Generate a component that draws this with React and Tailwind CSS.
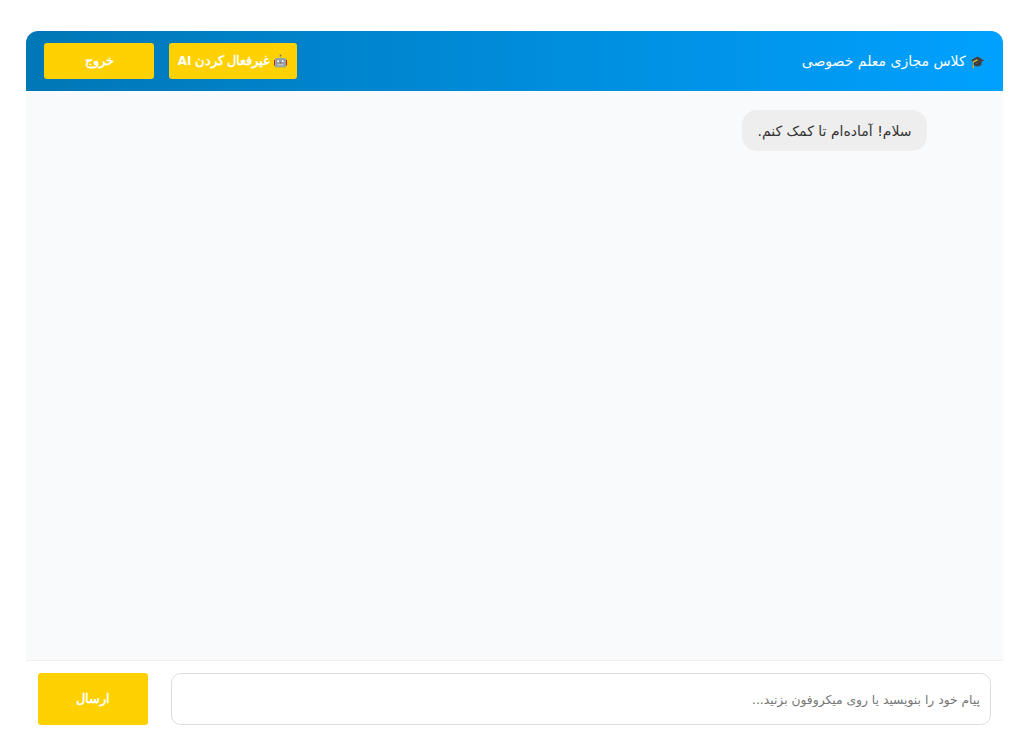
export default function App() {
  return (
    <div className="min-h-screen bg-white pl-[26px] pr-4 pt-[31px] pb-[10px] flex font-['DejaVu_Sans',sans-serif]" dir="rtl">
      <div className="w-[977px] h-[706px] flex flex-col rounded-t-xl overflow-hidden">
        <header className="h-[60px] flex items-center justify-between px-[18px] bg-gradient-to-l from-[#00a1ff] to-[#0077b6] text-white">
          <h1 className="text-sm font-normal"><span className="text-xs">🎓</span> کلاس مجازی معلم خصوصی</h1>
          <div className="flex gap-[15px]">
            <button className="h-9 w-[128px] rounded-[3px] bg-[#ffd100] text-white text-[13px] font-bold font-['Roboto',sans-serif]">
              <span className="text-xs">🤖</span> غیرفعال کردن <span className="text-xs font-['DejaVu_Sans',sans-serif]">AI</span>
            </button>
            <button className="h-9 w-[110px] rounded-[3px] bg-[#ffd100] text-white text-[13px] font-bold font-['Roboto',sans-serif]">خروج</button>
          </div>
        </header>

        <main className="flex-1 bg-[#f9fafb] pt-[19px] pr-[76px]">
          <div className="w-[185px] h-[41px] flex items-center justify-center rounded-[15px] bg-[#eeeeee] text-[#333333] text-sm">
            سلام! آماده‌ام تا کمک کنم.
          </div>
        </main>

        <footer className="h-[77px] flex gap-[23px] p-3 bg-white border-t border-[#eeeeee]">
          <input
            className="flex-1 h-[52px] rounded-[10px] border border-[#dddddd] px-[10px] pt-0.5 text-[12.3px] bg-white placeholder:text-[#757575] outline-none"
            placeholder="پیام خود را بنویسید یا روی میکروفون بزنید..."
          />
          <button className="w-[110px] h-[52px] rounded-[3px] bg-[#ffd100] text-white text-[13px] font-bold font-['Roboto',sans-serif]">ارسال</button>
        </footer>
      </div>
    </div>
  );
}
